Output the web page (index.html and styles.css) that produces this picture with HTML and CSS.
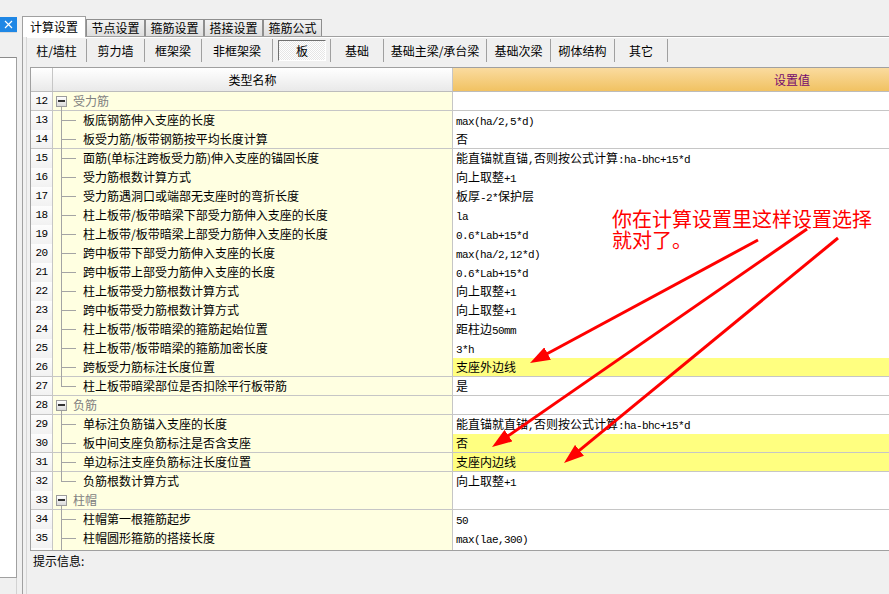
FILE: index.html
```html
<!DOCTYPE html>
<html lang="zh-CN">
<head>
<meta charset="utf-8">
<title>计算设置</title>
<link rel="stylesheet" href="styles.css">
</head>
<body>
<div class="app">
  <aside class="side">
    <div class="side-top">
      <span class="close"><svg width="17" height="15" viewBox="0 0 17 15"><path d="M5 4 L12 11 M12 4 L5 11" stroke="#fff" stroke-width="1.2" fill="none"/></svg></span>
    </div>
    <div class="side-bar"></div>
    <div class="side-list"></div>
    <div class="side-foot"></div>
  </aside>

  <section class="tabs">
    <nav class="tabbar">
      <span class="tab active">计算设置</span>
      <span class="tab">节点设置</span>
      <span class="tab">箍筋设置</span>
      <span class="tab">搭接设置</span>
      <span class="tab">箍筋公式</span>
    </nav>
    <div class="tabpage">
      <div class="inner">
        <div class="toolbar">
          <span class="tb">柱/墙柱</span>
          <span class="tb">剪力墙</span>
          <span class="tb">框架梁</span>
          <span class="tb">非框架梁</span>
          <span class="tb on">板</span>
          <span class="tb sep">基础</span>
          <span class="tb">基础主梁/承台梁</span>
          <span class="tb">基础次梁</span>
          <span class="tb">砌体结构</span>
          <span class="tb">其它</span>
        </div>

        <div class="grid">
          <div class="row head">
            <div class="num"></div>
            <div class="name">类型名称</div>
            <div class="val">设置值</div>
          </div>
          <div class="body">
            <div class="row grp"><div class="num">12</div><div class="name"><span class="box"></span>受力筋</div><div class="val"></div></div>
            <div class="row"><div class="num">13</div><div class="name">板底钢筋伸入支座的长度</div><div class="val"><span class="m">max(ha/2,5*d)</span></div></div>
            <div class="row"><div class="num">14</div><div class="name">板受力筋/板带钢筋按平均长度计算</div><div class="val">否</div></div>
            <div class="row"><div class="num">15</div><div class="name">面筋(单标注跨板受力筋)伸入支座的锚固长度</div><div class="val">能直锚就直锚<span class="m">,</span>否则按公式计算<span class="m">:ha-bhc+15*d</span></div></div>
            <div class="row"><div class="num">16</div><div class="name">受力筋根数计算方式</div><div class="val">向上取整<span class="m">+1</span></div></div>
            <div class="row"><div class="num">17</div><div class="name">受力筋遇洞口或端部无支座时的弯折长度</div><div class="val">板厚<span class="m">-2*</span>保护层</div></div>
            <div class="row"><div class="num">18</div><div class="name">柱上板带/板带暗梁下部受力筋伸入支座的长度</div><div class="val"><span class="m">la</span></div></div>
            <div class="row"><div class="num">19</div><div class="name">柱上板带/板带暗梁上部受力筋伸入支座的长度</div><div class="val"><span class="m">0.6*Lab+15*d</span></div></div>
            <div class="row"><div class="num">20</div><div class="name">跨中板带下部受力筋伸入支座的长度</div><div class="val"><span class="m">max(ha/2,12*d)</span></div></div>
            <div class="row"><div class="num">21</div><div class="name">跨中板带上部受力筋伸入支座的长度</div><div class="val"><span class="m">0.6*Lab+15*d</span></div></div>
            <div class="row"><div class="num">22</div><div class="name">柱上板带受力筋根数计算方式</div><div class="val">向上取整<span class="m">+1</span></div></div>
            <div class="row"><div class="num">23</div><div class="name">跨中板带受力筋根数计算方式</div><div class="val">向上取整<span class="m">+1</span></div></div>
            <div class="row"><div class="num">24</div><div class="name">柱上板带/板带暗梁的箍筋起始位置</div><div class="val">距柱边<span class="m">50mm</span></div></div>
            <div class="row"><div class="num">25</div><div class="name">柱上板带/板带暗梁的箍筋加密长度</div><div class="val"><span class="m">3*h</span></div></div>
            <div class="row hl"><div class="num">26</div><div class="name">跨板受力筋标注长度位置</div><div class="val">支座外边线</div></div>
            <div class="row last"><div class="num">27</div><div class="name">柱上板带暗梁部位是否扣除平行板带筋</div><div class="val">是</div></div>
            <div class="row grp"><div class="num">28</div><div class="name"><span class="box"></span>负筋</div><div class="val"></div></div>
            <div class="row"><div class="num">29</div><div class="name">单标注负筋锚入支座的长度</div><div class="val">能直锚就直锚<span class="m">,</span>否则按公式计算<span class="m">:ha-bhc+15*d</span></div></div>
            <div class="row hl"><div class="num">30</div><div class="name">板中间支座负筋标注是否含支座</div><div class="val">否</div></div>
            <div class="row hl"><div class="num">31</div><div class="name">单边标注支座负筋标注长度位置</div><div class="val">支座内边线</div></div>
            <div class="row last"><div class="num">32</div><div class="name">负筋根数计算方式</div><div class="val">向上取整<span class="m">+1</span></div></div>
            <div class="row grp"><div class="num">33</div><div class="name"><span class="box"></span>柱帽</div><div class="val"></div></div>
            <div class="row"><div class="num">34</div><div class="name">柱帽第一根箍筋起步</div><div class="val"><span class="m">50</span></div></div>
            <div class="row"><div class="num">35</div><div class="name">柱帽圆形箍筋的搭接长度</div><div class="val"><span class="m">max(lae,300)</span></div></div>
            <div class="row"><div class="num"></div><div class="name"></div><div class="val"></div></div>
          </div>
        </div>

        <div class="hint">提示信息:</div>
      </div>
    </div>
  </section>
</div>

<div class="note">你在计算设置里这样设置选择<br>就对了。</div>

<svg class="arrows" width="889" height="594" viewBox="0 0 889 594">
  <defs>
    <marker id="ah" markerUnits="userSpaceOnUse" markerWidth="22" markerHeight="14" refX="8" refY="7" orient="auto">
      <path d="M0,0 L20,7 L0,14 Z" fill="#ff0000"/>
    </marker>
  </defs>
  <line x1="758" y1="240" x2="540.6" y2="357.3" stroke="#ff0000" stroke-width="3" marker-end="url(#ah)"/>
  <line x1="807" y1="229" x2="501.9" y2="440.2" stroke="#ff0000" stroke-width="3" marker-end="url(#ah)"/>
  <line x1="838" y1="238" x2="573.3" y2="455.4" stroke="#ff0000" stroke-width="3" marker-end="url(#ah)"/>
</svg>
</body>
</html>
```

FILE: styles.css
```css
* { box-sizing: border-box; }

html, body { margin: 0; padding: 0; }

body {
  width: 889px;
  height: 594px;
  overflow: hidden;
  position: relative;
  background: #f0f0f0;
  color: #000;
  font-family: "Noto Sans CJK SC", "Noto Sans", sans-serif;
  font-size: 12px;
}

.app { display: flex; height: 594px; }

/* left docked panel */
.side { width: 17px; flex: none; display: flex; flex-direction: column; }
.side-top { height: 32px; display: flex; align-items: flex-end; }
.close { width: 17px; height: 15px; background: #1f87e5; display: block; }
.close svg { display: block; }
.side-bar { height: 25px; border-top: 1px solid #dadada; }
.side-list {
  height: 521px;
  background: #fff;
  border-top: 1px solid #8c8c8c;
  border-right: 1px solid #a0a0a0;
  border-bottom: 1px solid #a0a0a0;
}
.side-foot { flex: 1; border-right: 1px solid #d2d2d2; }

/* tab control */
.tabs { flex: 1; min-width: 0; margin-left: 5px; display: flex; flex-direction: column; }
.tabbar { height: 36px; display: flex; align-items: flex-end; position: relative; z-index: 1; }
.tab {
  width: 59px;
  height: 17px;
  border: 1px solid #8e8e8e;
  border-bottom: 0;
  background: linear-gradient(#f2f2f2, #dedede);
  text-align: center;
  line-height: 16px;
  white-space: nowrap;
}
.tab.active {
  width: 64px;
  height: 21px;
  margin-bottom: -1px;
  background: #fff;
  border-color: #a0a0a0;
  line-height: 20px;
}

.tabpage {
  flex: 1;
  min-height: 0;
  display: flex;
  border-top: 1px solid #a0a0a0;
  border-left: 1px solid #a0a0a0;
  padding-left: 3px;
}
.inner {
  flex: 1;
  min-width: 0;
  display: flex;
  flex-direction: column;
  border-left: 1px solid #d6d6d6;
}

/* sub toolbar */
.toolbar {
  height: 25px;
  flex: none;
  display: grid;
  grid-template-columns: 60px 58px 57px 71px 57px 54px 103px 64px 64px 53px;
  border-top: 1px solid #fff;
  padding-top: 1px;
}
.tb {
  height: 23px;
  line-height: 23px;
  text-align: center;
  white-space: nowrap;
  border-right: 1px solid #a0a0a0;
}
.tb.on {
  margin: 1px 4px 1px 5px;
  height: 21px;
  line-height: 19px;
  border: 1px solid;
  border-color: #707070 #fff #fff #707070;
  background: repeating-conic-gradient(#fff 0 25%, #e6e6e6 0 50%) 0 0 / 2px 2px;
}
.tb.sep { border-left: 1px solid #a0a0a0; }

/* property grid */
.grid {
  flex: none;
  width: 1101px;
  height: 484px;
  margin: 5px 0 0 3px;
  border: 1px solid #a0a0a0;
  border-right: 0;
  background: #fff;
  display: flex;
  flex-direction: column;
  overflow: hidden;
}
.body { flex: 1; min-height: 0; overflow: hidden; }

.row {
  display: grid;
  grid-template-columns: 22px 400px 1fr;
  height: 19px;
  border-bottom: 1px solid #c6c6c6;
  line-height: 18px;
}
.num {
  border-right: 1px solid #c6c6c6;
  background: linear-gradient(#fdfdfd, #f1f1f1);
  text-align: center;
  font-family: "Liberation Mono", monospace;
  font-size: 11px;
  letter-spacing: -0.6px;
}
.name {
  position: relative;
  border-right: 1px solid #c6c6c6;
  background: #ffffe1;
  padding-left: 30px;
  white-space: nowrap;
}
.val {
  background: #fff;
  padding-left: 3px;
  white-space: nowrap;
}
.m { font-family: "Liberation Mono", monospace; font-size: 11px; letter-spacing: -0.6px; }

.row.hl .val { background: #ffff80; }

/* tree lines */
.name::before {
  content: "";
  position: absolute;
  left: 8px;
  top: 0;
  bottom: -1px;
  width: 1px;
  background: #a4a4a4;
}
.name::after {
  content: "";
  position: absolute;
  left: 9px;
  top: 9px;
  width: 14px;
  height: 1px;
  background: #a4a4a4;
}
.row.last .name::before { bottom: auto; height: 10px; }

.row.grp .name { padding-left: 20px; color: #808080; }
.row.grp .name::before { top: 15px; }
.row.grp .name::after { display: none; }
.box {
  position: absolute;
  left: 3px;
  top: 4px;
  width: 11px;
  height: 11px;
  border: 1px solid #9c9c9c;
  background: linear-gradient(#ffffff, #dadada);
}
.box::after {
  content: "";
  position: absolute;
  left: 1px;
  top: 3px;
  width: 7px;
  height: 2px;
  background: #333;
}

.row.head { height: 24px; line-height: 23px; border-bottom-color: #bcbcbc; }
.head .num, .head .name {
  background: linear-gradient(#ffffff, #e9e9e9);
  text-align: center;
  padding: 0;
}
.head .name::before, .head .name::after { display: none; }
.head .val {
  background: linear-gradient(#fadb9f, #f1c262);
  color: #74096f;
  text-align: center;
  padding: 0;
}

.hint { padding-left: 6px; line-height: 20px; }

/* annotation overlay */
.note {
  position: absolute;
  left: 612px;
  top: 208px;
  color: #ff0000;
  font-size: 20px;
  line-height: 21px;
  white-space: nowrap;
}
.arrows { position: absolute; left: 0; top: 0; pointer-events: none; }
```
